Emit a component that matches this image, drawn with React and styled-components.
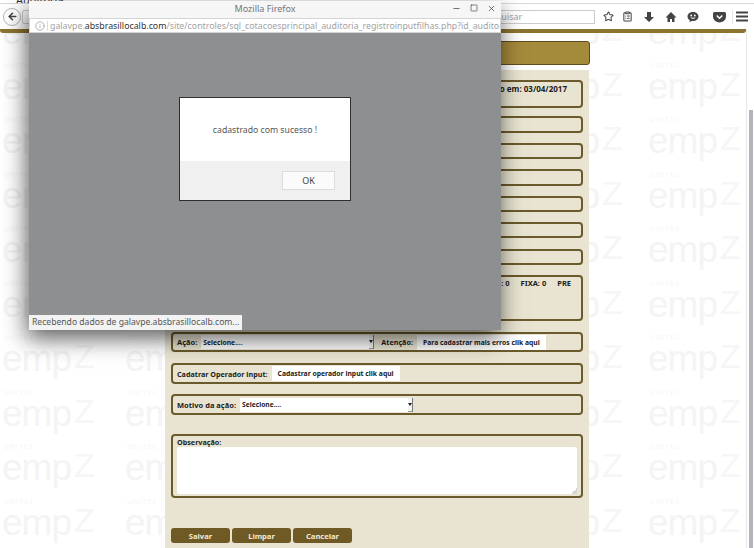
import React from 'react';
import styled, { createGlobalStyle } from 'styled-components';
import { Star, ClipboardList, ArrowLeft, X, Minus, Square, Info } from 'lucide-react';

const GlobalStyle = createGlobalStyle`
  html, body { margin: 0; padding: 0; background: #fff; }
  * { box-sizing: border-box; }
`;

const Screen = styled.div`
  position: relative;
  width: 754px;
  height: 548px;
  overflow: hidden;
  background: #fff;
  font-family: "Noto Sans", sans-serif;
`;

const WmLayer = styled.div`
  position: absolute;
  top: 33px;
  bottom: 0;
  left: ${p => p.$left}px;
  width: ${p => p.$width}px;
  overflow: hidden;
`;

const WmGrid = styled.div`
  display: grid;
  grid-template-columns: ${p => p.$col}px ${p => p.$col}px;
  grid-auto-rows: 54.5px;
  margin-top: -38px;
  margin-left: ${p => p.$shift}px;
`;

const WmTile = styled.div`
  padding-top: 12px;
  color: #f4f4f4;
  font-family: "Liberation Sans", sans-serif;
  white-space: nowrap;
`;

const WmLabel = styled.div`
  height: 7px;
  padding-left: 2px;
  font-size: 7px;
  line-height: 7px;
  letter-spacing: 1px;
  color: #f6f6f6;
`;

const WmLine = styled.div`
  line-height: 31px;
`;

const WmEmp = styled.span`
  font-size: 37px;
  letter-spacing: -1px;
`;

const WmZ = styled.span`
  font-size: 34px;
  margin-left: 3px;
  vertical-align: 3px;
  color: #f6f6f6;
`;

const TopStrip = styled.div`
  position: relative;
  height: 4px;
  overflow: hidden;
  padding-left: 16px;
  border-bottom: 1px solid #d8d8d8;
  background: #fff;
  font-size: 11px;
  line-height: 0;
  color: #333;
`;

const Toolbar = styled.div`
  position: relative;
  height: 25px;
  display: flex;
  align-items: center;
  padding: 0 4px 0 3px;
  background: #fff;
`;

const BackButton = styled.div`
  width: 18px;
  height: 18px;
  flex-shrink: 0;
  border-radius: 50%;
  border: 1px solid #b5b5b5;
  display: flex;
  align-items: center;
  justify-content: center;
  color: #444;
`;

const UrlField = styled.div`
  width: 120px;
  height: 14px;
  margin-left: 1px;
  border: 1px solid #ccc;
  border-radius: 2px 0 0 2px;
`;

const SearchBox = styled.div`
  margin-left: auto;
  width: 118px;
  height: 14px;
  border: 1px solid #ccc;
  padding-left: 3px;
  font-size: 9px;
  line-height: 12px;
  color: #a5a5a5;
`;

const ToolSlot = styled.div`
  width: ${p => p.$w}px;
  flex-shrink: 0;
  height: 14px;
  display: flex;
  align-items: center;
  justify-content: center;
  color: #444;
  border-left: ${p => (p.$line ? '1px solid #e4e4e4' : '0')};
`;

const GoldStrip = styled.div`
  position: relative;
  height: 4px;
  margin-right: 8px;
  background: #8c7430;
  border-radius: 0 0 3px 3px;
`;

const PageBody = styled.div`
  position: relative;
  padding-top: 8px;
`;

const HeaderBar = styled.div`
  margin-left: 165px;
  width: 425px;
  height: 24px;
  background: #a48a3b;
  border: 1px solid #5f4c1e;
  border-radius: 3px;
`;

const Panel = styled.div`
  margin: 5px 0 0 165px;
  width: 424px;
  height: 478px;
  padding: 10px 6px 0;
  background: #e8e4d1;
  display: flex;
  flex-direction: column;
`;

const FieldBox = styled.div`
  height: ${p => p.$h}px;
  margin-top: ${p => p.$gap || 0}px;
  border: 2px solid #6b5a2c;
  border-radius: 4px;
  display: flex;
  align-items: ${p => (p.$top ? 'flex-start' : 'center')};
  justify-content: ${p => (p.$end ? 'flex-end' : 'flex-start')};
  padding: ${p => (p.$top ? '1px' : '0')} ${p => p.$pr || 4}px 0 4px;
  font-size: 8px;
  font-weight: 700;
  color: #1d1d1d;
  gap: ${p => p.$spread || 4}px;
  white-space: nowrap;
`;

const Label = styled.span`
  font-size: ${p => p.$size || 8}px;
  margin-left: ${p => p.$ml || 0}px;
`;

const SelectBox = styled.div`
  width: ${p => p.$w}px;
  height: 14px;
  background: #fff;
  display: flex;
  align-items: center;
  justify-content: space-between;
  padding-left: 2px;
  font-size: 6.7px;
`;

const SelectArrow = styled.span`
  width: 5px;
  height: 14px;
  display: flex;
  align-items: center;
  justify-content: center;
  background: #f4f4f4;
  border-right: 1px solid #777;
  border-bottom: 1px solid #999;

  &::after {
    content: "";
    border-left: 2px solid transparent;
    border-right: 2px solid transparent;
    border-top: 3px solid #222;
  }
`;

const LinkBox = styled.div`
  height: 15px;
  background: #fff;
  padding: 0 6px;
  display: flex;
  align-items: center;
  font-size: 6.8px;
`;

const ObsBox = styled.div`
  display: flex;
  flex-direction: column;
  width: 100%;
`;

const ObsArea = styled.div`
  height: 47px;
  background:
    linear-gradient(135deg, transparent 50%, #d4d4d4 50%) no-repeat right bottom / 6px 6px,
    #fff;
  border-radius: 2px;
`;

const Buttons = styled.div`
  display: flex;
  gap: 2px;
  margin-top: 30px;
`;

const ActionButton = styled.button`
  width: 59px;
  height: 15px;
  padding: 0;
  border: 0;
  border-radius: 3px;
  background: #6f5a26;
  color: #efe9d6;
  font-family: "Noto Sans", sans-serif;
  font-size: 7.6px;
  font-weight: 700;
`;

const ScrollTrack = styled.div`
  position: absolute;
  top: 30px;
  right: 0;
  width: 8px;
  bottom: 0;
  background: #fff;
  border-left: 1px solid #e6e6e6;
`;

const ScrollThumb = styled.div`
  position: absolute;
  top: 80px;
  bottom: 0;
  left: 2px;
  width: 4px;
  background: #b3b3bb;
`;

const PopupWindow = styled.div`
  position: absolute;
  top: 1px;
  left: 29px;
  width: 472px;
  height: 329px;
  display: flex;
  flex-direction: column;
  background: #8e8f91;
  box-shadow: -2px 8px 22px rgba(0, 0, 0, 0.65);
`;

const TitleBar = styled.div`
  position: relative;
  height: 17px;
  flex-shrink: 0;
  background: #f6f6f6;
  text-align: center;
  font-size: 9px;
  line-height: 16px;
  color: #75757a;
`;

const WinControls = styled.div`
  position: absolute;
  top: 3px;
  right: 5px;
  display: flex;
  gap: 9px;
  color: #444;
`;

const UrlBar = styled.div`
  height: 15px;
  flex-shrink: 0;
  display: flex;
  align-items: center;
  gap: 2px;
  padding: 0 2px 0 5px;
  background: #fff;
  border: 1px solid #d4d4d4;
  overflow: hidden;
  font-size: 8.8px;
  color: #a2a2a2;
  white-space: nowrap;

  svg {
    flex-shrink: 0;
  }
`;

const UrlDivider = styled.span`
  width: 1px;
  height: 10px;
  flex-shrink: 0;
  background: #dcdcdc;
`;

const UrlText = styled.span`
  flex-shrink: 0;
`;

const UrlHost = styled.span`
  color: #333;
`;

const PopupBody = styled.div`
  flex: 1;
  display: flex;
  justify-content: center;
  padding-top: 64px;
  position: relative;
`;

const Dialog = styled.div`
  width: 172px;
  height: 104px;
  display: flex;
  flex-direction: column;
  background: #fff;
  border: 1px solid #2f2f2f;
`;

const DialogText = styled.div`
  flex: 1;
  display: flex;
  align-items: center;
  justify-content: center;
  font-size: 8.7px;
  color: #555;
`;

const DialogFooter = styled.div`
  height: 39px;
  display: flex;
  justify-content: flex-end;
  align-items: center;
  padding-right: 15px;
  background: #f0f0f0;
`;

const OkButton = styled.button`
  width: 53px;
  height: 19px;
  padding: 0;
  background: #fbfbfb;
  border: 1px solid #dcdcdc;
  font-family: "Noto Sans", sans-serif;
  font-size: 9px;
  color: #444;
`;

const StatusBar = styled.div`
  position: absolute;
  left: 0;
  bottom: 0;
  height: 15px;
  padding: 0 3px;
  background: #f3f3f3;
  font-size: 8.6px;
  line-height: 15px;
  color: #555;
  white-space: nowrap;
`;

const DownloadIcon = () => (
  <svg width="12" height="12" viewBox="0 0 12 12" fill="currentColor">
    <path d="M4 1h4v5h3L6 11 1 6h3z" />
  </svg>
);

const HomeIcon = () => (
  <svg width="12" height="12" viewBox="0 0 12 12" fill="currentColor">
    <path d="M6 1 .5 6.5h2V11H5V8h2v3h2.5V6.5h2z" />
  </svg>
);

const ChatIcon = () => (
  <svg width="12" height="12" viewBox="0 0 12 12">
    <path fill="currentColor" d="M6 1c3 0 5.500 1.900 5.500 4.500S9 10 6 10c-.5 0-1 0-1.400-.1L2.500 11.200l.3-2C1.300 8.400.5 7 .5 5.500.5 2.900 3 1 6 1z" />
    <circle cx="4.200" cy="4.500" r=".9" fill="#fff" />
    <circle cx="7.800" cy="4.500" r=".9" fill="#fff" />
    <path d="M3.800 6.500c1.200 1.100 3.200 1.100 4.400 0" stroke="#fff" strokeWidth="1" fill="none" />
  </svg>
);

const PocketIcon = () => (
  <svg width="13" height="12" viewBox="0 0 13 12">
    <path fill="currentColor" d="M1.500 1h10A1.500 1.500 0 0 1 13 2.500V5.500a6.500 6 0 0 1-13 0V2.500A1.500 1.500 0 0 1 1.500 1z" />
    <path d="M3.700 4.500 6.500 7.200 9.300 4.500" stroke="#fff" strokeWidth="1.500" fill="none" />
  </svg>
);

const MenuIcon = () => (
  <svg width="12" height="11" viewBox="0 0 12 11" fill="currentColor">
    <rect y="0.500" width="12" height="2" />
    <rect y="4.500" width="12" height="2" />
    <rect y="8.500" width="12" height="2" />
  </svg>
);

const watermarkTiles = Array.from({ length: 20 }, (_, i) => i);

const WatermarkTiles = () =>
  watermarkTiles.map(i => (
    <WmTile key={i}>
      <WmLabel>UNITEL</WmLabel>
      <WmLine>
        <WmEmp>emp</WmEmp>
        <WmZ>Z</WmZ>
      </WmLine>
    </WmTile>
  ));

const App = () => (
  <Screen>
    <GlobalStyle />
    <WmLayer $left={0} $width={165}>
      <WmGrid $col={123} $shift={2}><WatermarkTiles /></WmGrid>
    </WmLayer>
    <WmLayer $left={589} $width={157}>
      <WmGrid $col={118} $shift={-59}><WatermarkTiles /></WmGrid>
    </WmLayer>

    <TopStrip>Auditoria</TopStrip>
    <Toolbar>
      <BackButton><ArrowLeft size={11} strokeWidth={3.5} /></BackButton>
      <UrlField />
      <SearchBox>Pesquisar</SearchBox>
      <ToolSlot $w={3} />
      <ToolSlot $w={20}><Star size={11} strokeWidth={2.2} /></ToolSlot>
      <ToolSlot $w={18}><ClipboardList size={11} strokeWidth={2.2} /></ToolSlot>
      <ToolSlot $w={26}><DownloadIcon /></ToolSlot>
      <ToolSlot $w={18}><HomeIcon /></ToolSlot>
      <ToolSlot $w={26}><ChatIcon /></ToolSlot>
      <ToolSlot $w={26}><PocketIcon /></ToolSlot>
      <ToolSlot $w={18} $line><MenuIcon /></ToolSlot>
    </Toolbar>
    <GoldStrip />

    <PageBody>
      <HeaderBar />
      <Panel>
        <FieldBox $h={28} $top $end $pr={14}>Cadastrado em: 03/04/2017</FieldBox>
        <FieldBox $h={17} $gap={8} />
        <FieldBox $h={16} $gap={10} />
        <FieldBox $h={17} $gap={10} />
        <FieldBox $h={16} $gap={10} />
        <FieldBox $h={16} $gap={10} />
        <FieldBox $h={16} $gap={11} />
        <FieldBox $h={46} $gap={10} $top $end $spread={11} $pr={10}>
          <Label $size={7.5}>MOVEL: 0</Label>
          <Label $size={7.5}>FIXA: 0</Label>
          <Label $size={7.5}>PRE</Label>
        </FieldBox>
        <FieldBox $h={20} $gap={11}>
          <Label $size={7.5}>Ação:</Label>
          <SelectBox $w={173}>
            Selecione....
            <SelectArrow />
          </SelectBox>
          <Label $size={7.2} $ml={3}>Atenção:</Label>
          <LinkBox>Para cadastrar mais erros clik aqui</LinkBox>
        </FieldBox>
        <FieldBox $h={21} $gap={11}>
          <Label $size={7.2}>Cadatrar Operador input:</Label>
          <LinkBox>Cadastrar operador input clik aqui</LinkBox>
        </FieldBox>
        <FieldBox $h={21} $gap={10}>
          <Label $size={7.5}>Motivo da ação:</Label>
          <SelectBox $w={173}>
            Selecione....
            <SelectArrow />
          </SelectBox>
        </FieldBox>
        <FieldBox $h={64} $gap={19} $top>
          <ObsBox>
            <Label $size={7.2}>Observação:</Label>
            <ObsArea />
          </ObsBox>
        </FieldBox>
        <Buttons>
          <ActionButton>Salvar</ActionButton>
          <ActionButton>Limpar</ActionButton>
          <ActionButton>Cancelar</ActionButton>
        </Buttons>
      </Panel>
    </PageBody>

    <ScrollTrack><ScrollThumb /></ScrollTrack>

    <PopupWindow>
      <TitleBar>
        Mozilla Firefox
        <WinControls>
          <Minus size={9} />
          <Square size={8} />
          <X size={9} />
        </WinControls>
      </TitleBar>
      <UrlBar>
        <Info size={10} />
        <UrlDivider />
        <UrlText>galavpe.<UrlHost>absbrasillocalb.com</UrlHost>/site/controles/sql_cotacoesprincipal_auditoria_registroinputfilhas.php?id_auditoria</UrlText>
      </UrlBar>
      <PopupBody>
        <Dialog>
          <DialogText>cadastrado com sucesso !</DialogText>
          <DialogFooter><OkButton>OK</OkButton></DialogFooter>
        </Dialog>
        <StatusBar>Recebendo dados de galavpe.absbrasillocalb.com...</StatusBar>
      </PopupBody>
    </PopupWindow>
  </Screen>
);

export default App;
